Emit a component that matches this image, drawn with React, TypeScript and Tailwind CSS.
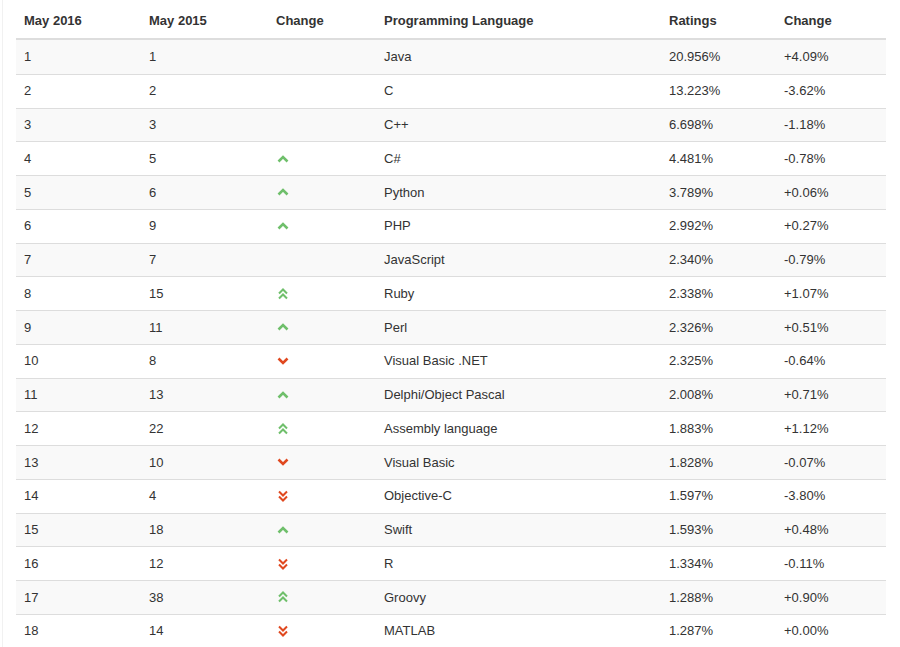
import React from "react";

type Dir = "" | "up" | "up2" | "down" | "down2";
const rows: [string, string, Dir, string, string, string][] = [
  ["1", "1", "", "Java", "20.956%", "+4.09%"],
  ["2", "2", "", "C", "13.223%", "-3.62%"],
  ["3", "3", "", "C++", "6.698%", "-1.18%"],
  ["4", "5", "up", "C#", "4.481%", "-0.78%"],
  ["5", "6", "up", "Python", "3.789%", "+0.06%"],
  ["6", "9", "up", "PHP", "2.992%", "+0.27%"],
  ["7", "7", "", "JavaScript", "2.340%", "-0.79%"],
  ["8", "15", "up2", "Ruby", "2.338%", "+1.07%"],
  ["9", "11", "up", "Perl", "2.326%", "+0.51%"],
  ["10", "8", "down", "Visual Basic .NET", "2.325%", "-0.64%"],
  ["11", "13", "up", "Delphi/Object Pascal", "2.008%", "+0.71%"],
  ["12", "22", "up2", "Assembly language", "1.883%", "+1.12%"],
  ["13", "10", "down", "Visual Basic", "1.828%", "-0.07%"],
  ["14", "4", "down2", "Objective-C", "1.597%", "-3.80%"],
  ["15", "18", "up", "Swift", "1.593%", "+0.48%"],
  ["16", "12", "down2", "R", "1.334%", "-0.11%"],
  ["17", "38", "up2", "Groovy", "1.288%", "+0.90%"],
  ["18", "14", "down2", "MATLAB", "1.287%", "+0.00%"],
];

function Arrow({ d }: { d: Dir }) {
  if (!d) return null;
  const green = "#6fbf6b";
  const red = "#e0481f";
  if (d === "up")
    return (
      <svg width="12" height="8" viewBox="0 0 12 8" className="block">
        <polyline points="1.5,6.5 6,2 10.5,6.5" fill="none" stroke={green} strokeWidth="2.6" />
      </svg>
    );
  if (d === "down")
    return (
      <svg width="12" height="8" viewBox="0 0 12 8" className="block">
        <polyline points="1.5,1.5 6,6 10.5,1.5" fill="none" stroke={red} strokeWidth="2.6" />
      </svg>
    );
  if (d === "up2")
    return (
      <svg width="12" height="12" viewBox="0 0 12 12" className="block">
        <polyline points="2,5.5 6,1.5 10,5.5" fill="none" stroke={green} strokeWidth="2" />
        <polyline points="2,10.5 6,6.5 10,10.5" fill="none" stroke={green} strokeWidth="2" />
      </svg>
    );
  return (
    <svg width="12" height="12" viewBox="0 0 12 12" className="block">
      <polyline points="2,1.5 6,5.5 10,1.5" fill="none" stroke={red} strokeWidth="2" />
      <polyline points="2,6.5 6,10.5 10,6.5" fill="none" stroke={red} strokeWidth="2" />
    </svg>
  );
}

const cols = "grid grid-cols-[125px_127px_108px_285px_115px_110px]";

export default function App() {
  return (
    <div
      className="w-[900px] h-[647px] overflow-hidden bg-white border-l border-l-[#f1f1f1] ml-[2px]"
      style={{ fontFamily: '"Liberation Sans", Arial, sans-serif' }}
    >
      <div className="w-[870px] ml-[13px] text-[13px] text-[#333]">
        <div className={`${cols} h-[40px] border-b-2 border-[#ddd] font-bold items-center pt-[4px]`}>
          {["May 2016", "May 2015", "Change", "Programming Language", "Ratings", "Change"].map((h, i) => (
            <div key={i} className="px-2">{h}</div>
          ))}
        </div>
        {rows.map((r, i) => (
          <div
            key={i}
            className={`${cols} h-[33.76px] items-center ${i > 0 ? "border-t border-[#ddd]" : ""} ${
              i % 2 === 0 ? "bg-[#f9f9f9]" : "bg-white"
            }`}
          >
            <div className="px-2">{r[0]}</div>
            <div className="px-2">{r[1]}</div>
            <div className="px-2 flex">
              <div className="ml-[1px]">
                <Arrow d={r[2]} />
              </div>
            </div>
            <div className="px-2">{r[3]}</div>
            <div className="px-2">{r[4]}</div>
            <div className="px-2">{r[5]}</div>
          </div>
        ))}
      </div>
    </div>
  );
}
